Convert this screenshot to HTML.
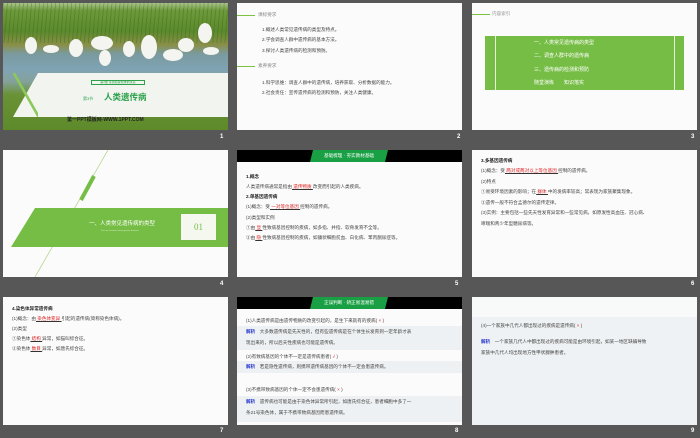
<!DOCTYPE html>
<html><head><meta charset="utf-8"><style>
*{margin:0;padding:0;box-sizing:border-box}
body{width:700px;height:438px;background:#575757;position:relative;overflow:hidden;font-family:"Liberation Sans","Noto Sans CJK SC",sans-serif}
.s{position:absolute;width:225px;height:127px;background:#fbfbfb;overflow:hidden}
.n{position:absolute;color:#fff;font-size:6px;font-weight:bold}
.t{position:absolute;font-size:4.6px;color:#444;white-space:nowrap;line-height:1}
.r{color:#d22;text-decoration:underline;text-decoration-color:#333}
.bar{position:absolute;left:0;top:0;width:225px;height:12px;background:#000}
.gb{position:absolute;left:73px;top:0;width:78px;height:12px;background:#1aa044;clip-path:polygon(3px 0,100% 0,calc(100% - 3px) 100%,0 100%);color:#fff;font-size:4.6px;text-align:center;line-height:12px}
.jx{color:#2233cc;font-weight:bold}
.band{position:absolute;left:0;width:225px;background:#eef1f3}
.b{position:absolute;background:#f4f4f0;border-radius:50%}
</style></head><body>

<!-- slide 1 -->
<div class="s" style="left:3px;top:3px;background:linear-gradient(#a9c48a 0,#6e9a3a 6%,#5b8a2c 22%,#8a8f48 33%,#7a9a9e 40%,#7fa3b4 52%,#84a29a 62%,#6a9236 72%,#5d8a2a 100%)">
 <div style="position:absolute;left:0;top:0;width:225px;height:40px;background:repeating-linear-gradient(95deg,rgba(40,80,20,.25) 0 1px,transparent 1px 4px)"></div>
 <div class="b" style="left:22px;top:34px;width:12px;height:17px"></div>
 <div class="b" style="left:40px;top:42px;width:16px;height:8px"></div>
 <div class="b" style="left:66px;top:36px;width:14px;height:18px"></div>
 <div class="b" style="left:88px;top:33px;width:22px;height:14px"></div>
 <div class="b" style="left:96px;top:47px;width:12px;height:16px"></div>
 <div class="b" style="left:120px;top:38px;width:12px;height:16px"></div>
 <div class="b" style="left:138px;top:32px;width:16px;height:24px"></div>
 <div class="b" style="left:160px;top:46px;width:20px;height:12px"></div>
 <div class="b" style="left:175px;top:35px;width:16px;height:14px"></div>
 <div class="b" style="left:195px;top:20px;width:14px;height:20px"></div>
 <div class="b" style="left:200px;top:44px;width:16px;height:8px"></div>
 <div style="position:absolute;left:10px;top:70px;width:215px;height:44px;background:#f2f4f0;clip-path:polygon(25px 0,100% 0,100% 100%,0 100%)"></div>
 <div style="position:absolute;left:10px;top:70px;width:25px;height:44px;background:linear-gradient(to top right,transparent 48%,#8cc85a 49%,#8cc85a 54%,transparent 55%)"></div>
 <div style="position:absolute;left:88px;top:77px;width:54px;height:5px;border:1px solid #2ca14a;font-size:3px;color:#2ca14a;text-align:center;line-height:3px">第2章 基因和染色体的关系</div>
 <div class="t" style="left:80px;top:94px;color:#2ca14a;font-size:4px">第3节</div>
 <div class="t" style="left:101px;top:90px;color:#2ca14a;font-size:8.5px;font-weight:bold">人类遗传病</div>
 <div class="t" style="left:64px;top:115px;color:#222;font-size:5px;font-weight:bold">第一PPT模板网-WWW.1PPT.COM</div>
</div>
<div class="n" style="left:220px;top:134px">1</div>

<!-- slide 2 -->
<div class="s" style="left:237px;top:3px">
 <div style="position:absolute;left:0;top:12px;width:18px;height:1px;background:#7bc243"></div>
 <div class="t" style="left:21px;top:10px;color:#888">课标要求</div>
 <div class="t" style="left:25px;top:25px">1.概述人类常见遗传病的类型及特点。</div>
 <div class="t" style="left:25px;top:35px">2.学会调查人群中遗传病的基本方法。</div>
 <div class="t" style="left:25px;top:46px">3.探讨人类遗传病的检测和预防。</div>
 <div style="position:absolute;left:0;top:63px;width:18px;height:1px;background:#7bc243"></div>
 <div class="t" style="left:21px;top:61px;color:#888">素养要求</div>
 <div class="t" style="left:25px;top:78px">1.科学思维：调查人群中的遗传病，培养获取、分析数据的能力。</div>
 <div class="t" style="left:25px;top:88px">2.社会责任：宣传遗传病的检测和预防，关注人类健康。</div>
</div>
<div class="n" style="left:457px;top:134px">2</div>

<!-- slide 3 -->
<div class="s" style="left:472px;top:3px">
 <div style="position:absolute;left:0;top:11px;width:18px;height:1px;background:#7bc243"></div>
 <div class="t" style="left:20px;top:9px;color:#999">内容索引</div>
 <div style="position:absolute;left:13px;top:33px;width:199px;height:54px;background:#76bd45"></div>
 <div style="position:absolute;left:23px;top:33px;width:1px;height:54px;background:#e8f3dc"></div>
 <div style="position:absolute;left:202px;top:33px;width:1px;height:54px;background:#e8f3dc"></div>
 <div class="t" style="left:62px;top:38px;color:#fff;font-size:5px">一、人类常见遗传病的类型</div>
 <div class="t" style="left:62px;top:51px;color:#fff;font-size:5px">二、调查人群中的遗传病</div>
 <div class="t" style="left:62px;top:65px;color:#fff;font-size:5px">三、遗传病的检测和预防</div>
 <div class="t" style="left:62px;top:78px;color:#fff;font-size:5px">随堂演练　　知识落实</div>
</div>
<div class="n" style="left:691px;top:134px">3</div>

<!-- slide 4 -->
<div class="s" style="left:3px;top:150px">
 <svg style="position:absolute;left:0;top:0" width="225" height="127"><line x1="105" y1="0" x2="32" y2="127" stroke="#a8d283" stroke-width="0.7"/><line x1="91" y1="26" x2="78" y2="50" stroke="#76bd45" stroke-width="4"/></svg>
 <div style="position:absolute;left:8px;top:58px;width:217px;height:39px;background:#76bd45;clip-path:polygon(24px 0,100% 0,100% 100%,0 100%)"></div>
 <div class="t" style="left:86px;top:72px;color:#fff;font-size:5.5px">一、人类常见遗传病的类型</div>
 <div class="t" style="left:98px;top:80px;color:#d8ecc8;font-size:2px">Part one common human genetic diseases</div>
 <div style="position:absolute;left:178px;top:64px;width:35px;height:26px;background:#f4f8ef;color:#76bd45;font-size:9px;text-align:center;line-height:26px;font-family:'Liberation Serif',serif">01</div>
</div>
<div class="n" style="left:220px;top:281px">4</div>

<!-- slide 5 -->
<div class="s" style="left:237px;top:150px">
 <div class="bar"></div><div class="gb">基础梳理 · 夯实教材基础</div>
 <div class="t" style="left:9px;top:25px;font-weight:bold;color:#222">1.概念</div>
 <div class="t" style="left:9px;top:35px">人类遗传病通常是指由<span class="r">&nbsp;遗传物质&nbsp;</span>改变而引起的人类疾病。</div>
 <div class="t" style="left:9px;top:45px;font-weight:bold;color:#222">2.单基因遗传病</div>
 <div class="t" style="left:9px;top:55px">(1)概念：受<span class="r">&nbsp;一对等位基因&nbsp;</span>控制的遗传病。</div>
 <div class="t" style="left:9px;top:66px">(2)类型和实例</div>
 <div class="t" style="left:9px;top:76px">①由<span class="r">&nbsp;显&nbsp;</span>性致病基因控制的疾病，如多指、并指、软骨发育不全等。</div>
 <div class="t" style="left:9px;top:86px">②由<span class="r">&nbsp;隐&nbsp;</span>性致病基因控制的疾病，如镰状细胞贫血、白化病、苯丙酮尿症等。</div>
</div>
<div class="n" style="left:455px;top:281px">5</div>

<!-- slide 6 -->
<div class="s" style="left:472px;top:150px">
 <div class="t" style="left:9px;top:9px;font-weight:bold;color:#222">3.多基因遗传病</div>
 <div class="t" style="left:9px;top:19px">(1)概念：受<span class="r">&nbsp;两对或两对以上等位基因&nbsp;</span>控制的遗传病。</div>
 <div class="t" style="left:9px;top:30px">(2)特点</div>
 <div class="t" style="left:9px;top:40px">①易受环境因素的影响；在<span class="r">&nbsp;群体&nbsp;</span>中的发病率较高；常表现为家族聚集现象。</div>
 <div class="t" style="left:9px;top:51px">②遗传一般不符合孟德尔的遗传定律。</div>
 <div class="t" style="left:9px;top:61px">(3)实例：主要包括一些先天性发育异常和一些常见病，如原发性高血压、冠心病、</div>
 <div class="t" style="left:9px;top:72px">哮喘和青少年型糖尿病等。</div>
</div>
<div class="n" style="left:691px;top:281px">6</div>

<!-- slide 7 -->
<div class="s" style="left:3px;top:297px;height:128px">
 <div class="t" style="left:9px;top:10px;font-weight:bold;color:#222">4.染色体异常遗传病</div>
 <div class="t" style="left:9px;top:20px">(1)概念：由<span class="r">&nbsp;染色体变异&nbsp;</span>引起的遗传病(简称染色体病)。</div>
 <div class="t" style="left:9px;top:30px">(2)类型</div>
 <div class="t" style="left:9px;top:40px">①染色体<span class="r">&nbsp;结构&nbsp;</span>异常，如猫叫综合征。</div>
 <div class="t" style="left:9px;top:50px">②染色体<span class="r">&nbsp;数目&nbsp;</span>异常，如唐氏综合征。</div>
</div>
<div class="n" style="left:220px;top:428px">7</div>

<!-- slide 8 -->
<div class="s" style="left:237px;top:297px;height:128px">
 <div class="bar"></div><div class="gb">正误判断 · 矫正易混易错</div>
 <div class="band" style="top:29px;height:24px"></div>
 <div class="band" style="top:64px;height:12px"></div>
 <div class="band" style="top:99px;height:26px"></div>
 <div class="t" style="left:9px;top:22px">(1)人类遗传病是由遗传物质的改变引起的，是生下来就有的疾病(<span style="color:#d22"> × </span>)</div>
 <div class="t" style="left:9px;top:33px"><span class="jx">解析</span>　大多数遗传病是先天性的，但有些遗传病是在个体生长发育到一定年龄才表</div>
 <div class="t" style="left:9px;top:44px">现出来的，所以后天性疾病也可能是遗传病。</div>
 <div class="t" style="left:9px;top:58px">(2)有致病基因的个体不一定是遗传病患者(<span style="color:#d22"> √ </span>)</div>
 <div class="t" style="left:9px;top:68px"><span class="jx">解析</span>　若是隐性遗传病，则携带遗传病基因的个体不一定会患遗传病。</div>
 <div class="t" style="left:9px;top:91px">(3)不携带致病基因的个体一定不会患遗传病(<span style="color:#d22"> × </span>)</div>
 <div class="t" style="left:9px;top:103px"><span class="jx">解析</span>　遗传病也可能是由于染色体异常所引起，如唐氏综合征，患者细胞中多了一</div>
 <div class="t" style="left:9px;top:114px">条21号染色体，属于不携带致病基因而患遗传病。</div>
</div>
<div class="n" style="left:455px;top:428px">8</div>

<!-- slide 9 -->
<div class="s" style="left:472px;top:297px;height:128px;background:#eff2f4">
 <div style="position:absolute;left:0;top:0;width:225px;height:20px;background:#f8f9f9"></div>
 <div class="t" style="left:9px;top:27px">(4)一个家族中几代人都出现过的疾病是遗传病(<span style="color:#d22"> × </span>)</div>
 <div class="t" style="left:9px;top:43px"><span class="jx">解析</span>　一个家族几代人中都出现过的疾病可能是由环境引起，如某一地区缺碘导致</div>
 <div class="t" style="left:9px;top:54px">家族中几代人均出现地方性甲状腺肿患者。</div>
</div>
<div class="n" style="left:691px;top:428px">9</div>

</body></html>
